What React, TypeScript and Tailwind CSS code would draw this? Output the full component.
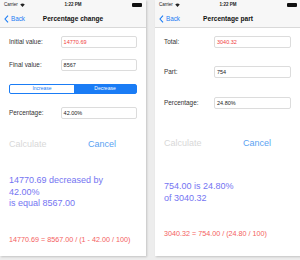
const font = { fontFamily: '"Liberation Sans", Arial, sans-serif' };

function StatusNav({ title }: { title: string }) {
  return (
    <div className="bg-[#f7f7f7] border-b border-[#d9d9d9]">
      <div className="h-[10px] flex items-center justify-between px-[4px] text-[4.5px] text-[#222] relative">
        <span className="flex items-center gap-[2px]">
          Carrier
          <svg width="5" height="4" viewBox="0 0 10 8">
            <path d="M5 8 L0.5 3 A7 7 0 0 1 9.5 3 Z" fill="#222" />
          </svg>
        </span>
        <span className="absolute left-1/2 -translate-x-1/2 font-semibold">1:22 PM</span>
        <span className="w-[10px] h-[4px] bg-[#111] rounded-[1px]" />
      </div>
      <div className="h-[17px] flex items-center relative px-[4px]">
        <span className="flex items-center gap-[2px] text-[#1a7cf5] text-[6.3px]">
          <svg width="5" height="8" viewBox="0 0 5 8">
            <path d="M4 0.6 L1 4 L4 7.4" fill="none" stroke="#1a7cf5" strokeWidth="1.1" />
          </svg>
          Back
        </span>
        <span className="absolute left-1/2 -translate-x-1/2 font-bold text-[6.6px] text-[#111] whitespace-nowrap">
          {title}
        </span>
      </div>
    </div>
  );
}

function Row({ label, value, red, labelW }: { label: string; value: string; red?: boolean; labelW: string }) {
  return (
    <div className="flex items-center">
      <span className={`${labelW} text-[6.4px] text-[#333]`}>{label}</span>
      <div
        className={`w-[77px] h-[12px] border border-[#dcdcdc] rounded-[2px] flex items-center pl-[2px] text-[5.5px] ${
          red ? 'text-[#f03c3c]' : 'text-[#222]'
        }`}
      >
        {value}
      </div>
    </div>
  );
}

function Buttons() {
  return (
    <div className="flex items-center text-[9px] h-[12px]">
      <span className="w-[79px] text-[#d8d8d8]">Calculate</span>
      <span className="text-[#5aa2f2]">Cancel</span>
    </div>
  );
}

export default function App() {
  return (
    <div className="w-[300px] h-[260px] bg-[#ededed] flex gap-[9px] overflow-hidden" style={font}>
      <div className="w-[146px] h-[256px] bg-white shadow-[1px_1px_2px_rgba(0,0,0,0.18)] flex flex-col shrink-0">
        <StatusNav title="Percentage change" />
        <div className="px-[9px] flex flex-col">
          <div className="mt-[8px]">
            <Row label="Initial value:" value="14770.69" red labelW="w-[52px]" />
          </div>
          <div className="mt-[11px]">
            <Row label="Final value:" value="8567" labelW="w-[52px]" />
          </div>
          <div className="mt-[13px] h-[10px] flex border border-[#1a7cf5] rounded-[2px] text-[5px]">
            <span className="w-[64px] flex items-center justify-center text-[#1a7cf5]">Increase</span>
            <span className="flex-1 flex items-center justify-center bg-[#1a7cf5] text-white">Decrease</span>
          </div>
          <div className="mt-[13px]">
            <Row label="Percentage:" value="42.00%" labelW="w-[52px]" />
          </div>
          <div className="mt-[20px]">
            <Buttons />
          </div>
          <div className="mt-[24px] text-[9px] leading-[11.5px] text-[#7474f2]">
            14770.69 decreased by
            <br />
            42.00%
            <br />
            is equal 8567.00
          </div>
          <div className="mt-[25px] text-[7.2px] text-[#f45e5e] whitespace-nowrap">
            14770.69 = 8567.00 / (1 - 42.00 / 100)
          </div>
        </div>
      </div>
      <div className="w-[146px] h-[256px] bg-white shadow-[1px_1px_2px_rgba(0,0,0,0.18)] flex flex-col shrink-0">
        <StatusNav title="Percentage part" />
        <div className="px-[9px] flex flex-col">
          <div className="mt-[8px]">
            <Row label="Total:" value="3040.32" red labelW="w-[50px]" />
          </div>
          <div className="mt-[18px]">
            <Row label="Part:" value="754" labelW="w-[50px]" />
          </div>
          <div className="mt-[19px]">
            <Row label="Percentage:" value="24.80%" labelW="w-[50px]" />
          </div>
          <div className="mt-[29px]">
            <Buttons />
          </div>
          <div className="mt-[31px] text-[9px] leading-[11.5px] text-[#7474f2]">
            754.00 is 24.80%
            <br />
            of 3040.32
          </div>
          <div className="mt-[25px] text-[7.2px] text-[#f45e5e] whitespace-nowrap">
            3040.32 = 754.00 / (24.80 / 100)
          </div>
        </div>
      </div>
    </div>
  );
}
